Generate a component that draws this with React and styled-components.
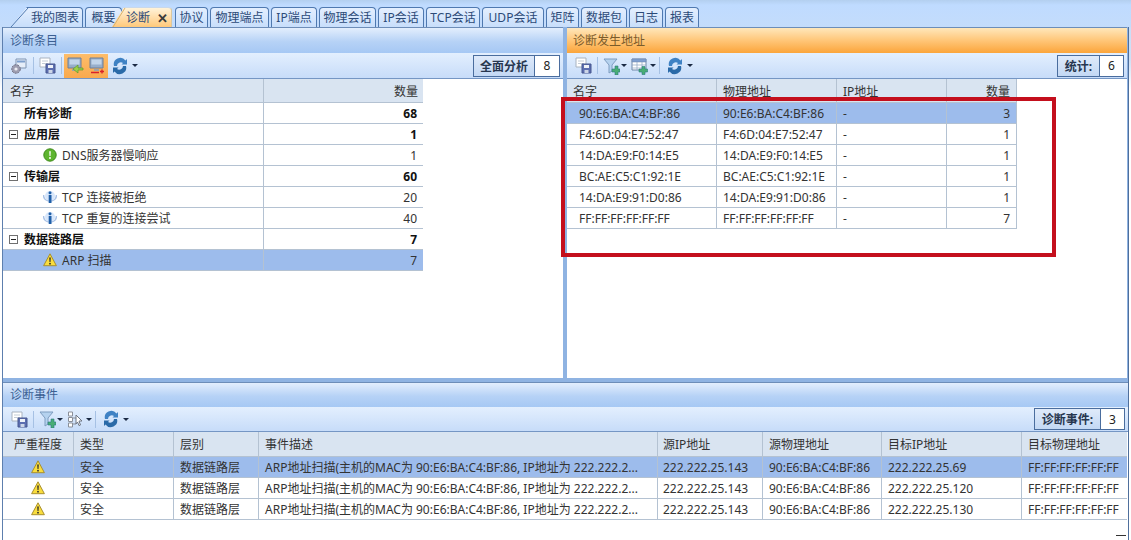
import React from "react";
import styled, { createGlobalStyle } from "styled-components";

const GlobalStyle = createGlobalStyle`
  html, body { margin: 0; padding: 0; background: #fff; }
  body { font-family: "Noto Sans", "Noto Sans CJK SC", sans-serif; font-size: 12px; color: #2b2b2b; }
`;

const Page = styled.div`
  position: relative;
  width: 1131px;
  height: 540px;
  overflow: hidden;
  background: linear-gradient(#c4dcfb 0, #cfe0f5 60px, #fff 90px);
`;

const TabStrip = styled.div`
  display: flex;
  align-items: flex-end;
  height: 27px;
  padding-left: 10px;
  background: linear-gradient(#b3cfef 0, #bfdbff 5px, #c4dcfb 100%);
`;

const Tab = styled.div`
  position: relative;
  box-sizing: border-box;
  flex: none;
  display: flex;
  align-items: center;
  justify-content: ${(p) => (p.$slant ? "flex-start" : "center")};
  width: ${(p) => p.$w}px;
  height: 20px;
  margin-right: ${(p) => p.$gap ?? 2}px;
  padding-left: ${(p) => p.$pad ?? 0}px;
  font-size: 12px;
  line-height: 18px;
  white-space: nowrap;
  color: #2c4a78;
  background: ${(p) => (p.$active ? "linear-gradient(#fff3d9, #ffd9a0 60%, #ffc97a)" : "linear-gradient(#e4effe, #c8defb)")};
  border: 1px solid #4f79b0;
  border-bottom: 0;
  border-left-color: ${(p) => (p.$slant ? "transparent" : "#4f79b0")};
  border-top-color: ${(p) => (p.$active ? "#c9d8ea" : "#4f79b0")};
  border-right-color: ${(p) => (p.$active ? "#d9c7a0" : "#4f79b0")};
  border-radius: ${(p) => (p.$slant ? "0 4px 0 0" : "4px 4px 0 0")};
  clip-path: ${(p) => (p.$slant ? `polygon(${p.$slant}px 0, 100% 0, 100% 100%, 0 100%)` : "none")};
  z-index: ${(p) => (p.$active ? 2 : 1)};
`;

const TabSlantLine = styled.svg`
  position: absolute;
  left: -1px;
  top: -1px;
  display: block;
`;

const TabClose = styled.span`
  margin-left: 7px;
  font-size: 13px;
  font-weight: 700;
  color: #3b3b3b;
`;

const Workspace = styled.div`
  display: grid;
  grid-template-rows: 351px 4px 158px;
  width: 1125px;
  height: 513px;
  margin-left: 2px;
  background: #8fb3e2;
  border-left: 1px solid #5d7fae;
  border-right: 1px solid #4f6f9c;
`;

const TopPanes = styled.div`
  display: grid;
  grid-template-columns: 560px 4px 560px;
  min-height: 0;
`;

const Gutter = styled.div`
  background: #8fb3e2;
`;

const HSplit = styled.div`
  background: #8fb3e2;
`;

const Pane = styled.section`
  display: flex;
  flex-direction: column;
  min-width: 0;
  min-height: 0;
  background: #fff;
`;

const PaneTitle = styled.header`
  display: flex;
  align-items: center;
  flex: none;
  box-sizing: border-box;
  height: ${(p) => p.$h ?? 26}px;
  padding: 0 0 2px ${(p) => (p.$active ? 6 : 7)}px;
  font-size: 12px;
  border-top: 1px solid #6d8db8;
  background: ${(p) =>
    p.$active
      ? "linear-gradient(#ffe7bb, #ffc678 50%, #fba53b)"
      : "linear-gradient(#e3eefd, #b6d2f6 55%, #a6c8f4)"};
  color: ${(p) => (p.$active ? "#7a5b2b" : "#3b5f92")};
`;

const Toolbar = styled.div`
  display: flex;
  align-items: center;
  flex: none;
  box-sizing: border-box;
  height: ${(p) => p.$h ?? 26}px;
  padding: 0 3px 0 5px;
  background: linear-gradient(#e3effe, #c7dcf9);
  border-bottom: 1px solid #7596c4;
`;

const ToolButton = styled.div`
  display: flex;
  align-items: center;
  justify-content: center;
  flex: none;
  width: ${(p) => p.$w ?? 22}px;
  height: 24px;
  margin-left: ${(p) => p.$left ?? 0}px;
  background: ${(p) => (p.$on ? "linear-gradient(#fdbd6b, #f9a94e)" : "transparent")};
`;

const ToolSep = styled.span`
  flex: none;
  width: 1px;
  height: 17px;
  margin: 0 2px 0 3px;
  background: #a6c1e4;
`;

const Caret = styled.span`
  flex: none;
  width: 0;
  height: 0;
  margin-left: ${(p) => p.$left ?? 1}px;
  border-left: 3px solid transparent;
  border-right: 3px solid transparent;
  border-top: 3px solid #1b2a44;
`;

const Stat = styled.div`
  display: flex;
  flex: none;
  box-sizing: border-box;
  height: 22px;
  margin-left: auto;
  border: 1px solid #4a6d9e;
`;

const StatLabel = styled.span`
  display: flex;
  align-items: center;
  justify-content: center;
  box-sizing: border-box;
  width: ${(p) => p.$w}px;
  font-weight: 700;
  color: #27364f;
  background: linear-gradient(#dfeafa, #c3d8f4);
  border-right: 1px solid #4a6d9e;
`;

const StatValue = styled.span`
  display: flex;
  align-items: center;
  justify-content: center;
  width: ${(p) => p.$w ?? 23}px;
  background: #fff;
  color: #222;
`;

const Table = styled.div`
  display: flex;
  flex-direction: column;
  width: ${(p) => p.$w}px;
`;

const Row = styled.div`
  display: grid;
  grid-template-columns: ${(p) => p.$cols};
  height: ${(p) => p.$h ?? 21}px;
  box-sizing: border-box;
  border-bottom: 1px solid #b4c2d2;
  background: ${(p) => (p.$head ? "#d9e4f1" : p.$sel ? "#9dbcec" : "#fff")};
  font-weight: ${(p) => (p.$bold ? 700 : 400)};
  color: ${(p) => (p.$bold ? "#111" : "#333")};
`;

const Cell = styled.div`
  display: flex;
  align-items: center;
  justify-content: ${(p) => p.$justify ?? "flex-start"};
  box-sizing: border-box;
  min-width: 0;
  padding: 0 ${(p) => p.$rpad ?? 6}px 0 ${(p) => p.$indent ?? 6}px;
  white-space: nowrap;
  overflow: hidden;
  border-right: 1px solid ${(p) => (p.$last ? "transparent" : "#b4c2d2")};
`;

const Expander = styled.span`
  position: relative;
  flex: none;
  box-sizing: border-box;
  width: 9px;
  height: 9px;
  margin: 0 6px 0 0;
  border: 1px solid #707070;
  background: #fff;
  &::after {
    content: "";
    position: absolute;
    left: 1px;
    right: 1px;
    top: 3px;
    height: 1px;
    background: #222;
  }
`;

const CellIcon = styled.span`
  display: inline-flex;
  flex: none;
  margin-right: 5px;
`;

const Callout = styled.div`
  position: absolute;
  left: 561px;
  top: 97px;
  width: 495px;
  height: 160px;
  box-sizing: border-box;
  border: 4px solid #c40f1d;
  pointer-events: none;
  z-index: 5;
`;

const CornerDash = styled.span`
  position: absolute;
  left: 1116px;
  top: 535px;
  width: 10px;
  height: 1px;
  background: #333;
`;

const SaveIcon = () => (
  <svg width="17" height="17" viewBox="0 0 17 17">
    <path d="M1 1h10v9H1z" fill="#fff" stroke="#a9b3c0" />
    <path d="M3 4h6M3 6.500h6" stroke="#c3ccd6" />
    <path d="M7 7h9v9H7z" fill="#5c6eb0" stroke="#46578f" />
    <path d="M9 8h5v3H9z" fill="#eef2f8" />
    <path d="M9.500 13h4v3h-4z" fill="#cdd6e7" />
  </svg>
);

const GearIcon = () => (
  <svg width="18" height="18" viewBox="0 0 18 18">
    <path d="M6 2h10v9H6z" fill="#e6eef9" stroke="#7f94b2" />
    <path d="M7 3.500h8v2H7z" fill="#7d9fcc" />
    <circle cx="6" cy="12" r="4.300" fill="#9d9db0" stroke="#6c6c80" strokeDasharray="2 1" />
    <circle cx="6" cy="12" r="1.600" fill="#ececf2" />
  </svg>
);

const MonitorIcon = ({ green }) => (
  <svg width="17" height="18" viewBox="0 0 17 18">
    <path d="M1 1h13v10H1z" fill="#97aecb" stroke="#6d7f98" />
    <path d="M2.500 2.500h10v5h-10z" fill="#c1d4ea" />
    <path d="M5 12h5v2H5z" fill="#a3a3a3" />
    {green ? (
      <path d="M16 11h-5V8l-5 4 5 4v-3h5z" fill="#9ccf4a" stroke="#5f9a2a" strokeWidth=".7" />
    ) : (
      <path d="M2 15.500h8M11 14.500h4M13 12.500v4" stroke="#d8222a" strokeWidth="1.400" />
    )}
  </svg>
);

const RefreshIcon = () => (
  <svg width="16" height="18" viewBox="0 0 16 18">
    <path d="M13.500 3.500A6.500 6.500 0 0 0 2 9h3a3.800 3.800 0 0 1 6-3L9.500 7.500H15V2z" fill="#3f82c4" />
    <path d="M2.500 14.500A6.500 6.500 0 0 0 14 9h-3a3.800 3.800 0 0 1-6 3l1.500-1.500H1V16z" fill="#2a6aa8" />
  </svg>
);

const FilterIcon = () => (
  <svg width="17" height="18" viewBox="0 0 17 18">
    <path d="M1 2h13L9 8v6L6 16V8z" fill="#b5d2ef" stroke="#7f9dc0" />
    <path d="M9 12h3V9h3v3h2v3h-2v3h-3v-3H9z" fill="#49ad75" stroke="#2a7a80" strokeWidth=".6" />
  </svg>
);

const GridIcon = () => (
  <svg width="17" height="18" viewBox="0 0 17 18">
    <path d="M1 2h14v11H1z" fill="#fff" stroke="#6f87a8" />
    <path d="M1 2h14v3H1z" fill="#7f9fd0" stroke="#6f87a8" strokeWidth=".5" />
    <path d="M1 8h14M1 11h14M6 5v8M11 5v8" stroke="#8ca3c2" strokeWidth=".7" />
    <path d="M8 12h3V9.500h3V12h2.500v3H14v2.500h-3V15H8z" fill="#49ad75" stroke="#2a7a80" strokeWidth=".6" />
  </svg>
);

const CursorTreeIcon = () => (
  <svg width="17" height="18" viewBox="0 0 17 18">
    <path d="M1.500 2h4v4h-4zM1.500 7.500h4v4h-4zM1.500 13h4v4h-4z" fill="#fff" stroke="#8a8f98" />
    <path d="M6 8h3M6 14h3" stroke="#8a8f98" />
    <path d="M9 5l6 6h-3l1.500 4-1.500.6L10.500 12 9 14z" fill="#fff" stroke="#6f7784" />
  </svg>
);

const WarnIcon = () => (
  <svg width="14" height="14" viewBox="0 0 14 14">
    <path d="M7 .8 13.400 12.700H.6z" fill="#f9dd3e" stroke="#a88f2e" strokeLinejoin="round" />
    <path d="M6.200 4.500h1.600L7.500 9h-1z" fill="#2a2a2a" />
    <circle cx="7" cy="10.700" r=".9" fill="#2a2a2a" />
  </svg>
);

const OkIcon = () => (
  <svg width="14" height="14" viewBox="0 0 14 14">
    <circle cx="7" cy="7" r="6.200" fill="#5eb52f" stroke="#3d8a1c" />
    <path d="M6.200 3.200h1.600L7.500 8h-1z" fill="#fff" />
    <circle cx="7" cy="10" r="1" fill="#fff" />
  </svg>
);

const InfoIcon = () => (
  <svg width="14" height="15" viewBox="0 0 14 15">
    <path d="M.5 5c0 4 3 6 6.500 6s6.500-2 6.500-6" fill="none" stroke="#a9c2e6" strokeWidth="1.500" />
    <circle cx="7" cy="6" r="5" fill="#d8e7fb" />
    <rect x="5.700" y="5" width="2.800" height="8" fill="#1f5fa8" />
    <circle cx="7" cy="2.800" r="1.500" fill="#1f5fa8" />
  </svg>
);

const tabs = [
  { label: "我的图表", w: 73, slant: 17, pad: 20 },
  { label: "概要", w: 37, gap: -10 },
  { label: "诊断", w: 60, slant: 12, pad: 13, active: true, gap: 3 },
  { label: "协议", w: 33 },
  { label: "物理端点", w: 59 },
  { label: "IP端点", w: 46 },
  { label: "物理会话", w: 57 },
  { label: "IP会话", w: 46 },
  { label: "TCP会话", w: 54 },
  { label: "UDP会话", w: 62 },
  { label: "矩阵", w: 33 },
  { label: "数据包", w: 46 },
  { label: "日志", w: 34 },
  { label: "报表", w: 34 },
];

const diagCols = "261px 159px";
const addrCols = "150px 120px 110px 70px";
const eventCols = "71px 100px 85px 399px 105px 119px 140px 105px";

const diagRows = [
  { name: "所有诊断", count: 68, bold: true, indent: 21 },
  { name: "应用层", count: 1, bold: true, group: true },
  { name: "DNS服务器慢响应", count: 1, icon: <OkIcon /> },
  { name: "传输层", count: 60, bold: true, group: true },
  { name: "TCP 连接被拒绝", count: 20, icon: <InfoIcon /> },
  { name: "TCP 重复的连接尝试", count: 40, icon: <InfoIcon /> },
  { name: "数据链路层", count: 7, bold: true, group: true },
  { name: "ARP 扫描", count: 7, icon: <WarnIcon />, sel: true },
];

const addrRows = [
  { mac: "90:E6:BA:C4:BF:86", count: 3, sel: true },
  { mac: "F4:6D:04:E7:52:47", count: 1 },
  { mac: "14:DA:E9:F0:14:E5", count: 1 },
  { mac: "BC:AE:C5:C1:92:1E", count: 1 },
  { mac: "14:DA:E9:91:D0:86", count: 1 },
  { mac: "FF:FF:FF:FF:FF:FF", count: 7 },
];

const eventRows = [
  { target: "222.222.25.69", sel: true },
  { target: "222.222.25.120" },
  { target: "222.222.25.130" },
];

const eventDesc = "ARP地址扫描(主机的MAC为 90:E6:BA:C4:BF:86, IP地址为 222.222.2...";

const eventHead = ["严重程度", "类型", "层别", "事件描述", "源IP地址", "源物理地址", "目标IP地址", "目标物理地址"];

const Refresh = ({ left }) => (
  <>
    <ToolButton $w={18} $left={left}><RefreshIcon /></ToolButton>
    <Caret $left={3} />
  </>
);

export default function App() {
  return (
    <Page>
      <GlobalStyle />
      <TabStrip>
        {tabs.map((t) => (
          <Tab key={t.label} $w={t.w} $gap={t.gap} $slant={t.slant} $pad={t.pad} $active={t.active}>
            {t.slant && (
              <TabSlantLine width={t.slant + 2} height="20" viewBox={`0 0 ${t.slant + 2} 20`}>
                <line x1="1" y1="20" x2={t.slant + 1} y2="1" stroke={t.active ? "#d9b26e" : "#4f79b0"} />
              </TabSlantLine>
            )}
            {t.label}
            {t.active && <TabClose>✕</TabClose>}
          </Tab>
        ))}
      </TabStrip>

      <Workspace>
        <TopPanes>
          <Pane>
            <PaneTitle>诊断条目</PaneTitle>
            <Toolbar>
              <ToolButton><GearIcon /></ToolButton>
              <ToolSep />
              <ToolButton><SaveIcon /></ToolButton>
              <ToolSep />
              <ToolButton $on><MonitorIcon green /></ToolButton>
              <ToolButton $on><MonitorIcon /></ToolButton>
              <Refresh left={3} />
              <Stat>
                <StatLabel $w={61}>全面分析</StatLabel>
                <StatValue $w={24}>8</StatValue>
              </Stat>
            </Toolbar>
            <Table $w={420}>
              <Row $head $h={24} $cols={diagCols}>
                <Cell $indent={7}>名字</Cell>
                <Cell $justify="flex-end" $rpad={4} $last>数量</Cell>
              </Row>
              {diagRows.map((r) => (
                <Row key={r.name} $cols={diagCols} $bold={r.bold} $sel={r.sel}>
                  <Cell $indent={r.icon ? 40 : r.group ? 6 : r.indent}>
                    {r.group && <Expander />}
                    {r.icon && <CellIcon>{r.icon}</CellIcon>}
                    {r.name}
                  </Cell>
                  <Cell $justify="flex-end" $rpad={5} $last>{r.count}</Cell>
                </Row>
              ))}
            </Table>
          </Pane>

          <Gutter />

          <Pane>
            <PaneTitle $active>诊断发生地址</PaneTitle>
            <Toolbar>
              <ToolButton><SaveIcon /></ToolButton>
              <ToolSep />
              <ToolButton><FilterIcon /></ToolButton>
              <Caret $left={-1} />
              <ToolButton $w={24}><GridIcon /></ToolButton>
              <Caret $left={-1} />
              <ToolSep />
              <Refresh left={4} />
              <Stat>
                <StatLabel $w={42}>统计:</StatLabel>
                <StatValue>6</StatValue>
              </Stat>
            </Toolbar>
            <Table $w={450}>
              <Row $head $h={24} $cols={addrCols}>
                <Cell>名字</Cell>
                <Cell>物理地址</Cell>
                <Cell>IP地址</Cell>
                <Cell $justify="flex-end">数量</Cell>
              </Row>
              {addrRows.map((r) => (
                <Row key={r.mac} $cols={addrCols} $sel={r.sel}>
                  <Cell $indent={12}>{r.mac}</Cell>
                  <Cell>{r.mac}</Cell>
                  <Cell>-</Cell>
                  <Cell $justify="flex-end">{r.count}</Cell>
                </Row>
              ))}
            </Table>
          </Pane>
        </TopPanes>

        <HSplit />

        <Pane>
          <PaneTitle $h={25}>诊断事件</PaneTitle>
          <Toolbar $h={25}>
            <ToolButton><SaveIcon /></ToolButton>
            <ToolSep />
            <ToolButton><FilterIcon /></ToolButton>
            <Caret $left={-1} />
            <ToolButton $w={24}><CursorTreeIcon /></ToolButton>
            <Caret $left={-1} />
            <ToolSep />
            <Refresh left={4} />
            <Stat>
              <StatLabel $w={66}>诊断事件:</StatLabel>
              <StatValue>3</StatValue>
            </Stat>
          </Toolbar>
          <Table $w={1124}>
            <Row $head $h={25} $cols={eventCols}>
              {eventHead.map((h, i) => (
                <Cell
                  key={h}
                  $indent={h === "源IP地址" ? 5 : 6}
                  $justify={i === 0 ? "center" : "flex-start"}
                  $last={i === eventHead.length - 1}
                >
                  {h}
                </Cell>
              ))}
            </Row>
            {eventRows.map((r) => (
              <Row key={r.target} $cols={eventCols} $sel={r.sel}>
                <Cell $justify="center"><WarnIcon /></Cell>
                <Cell>安全</Cell>
                <Cell>数据链路层</Cell>
                <Cell>{eventDesc}</Cell>
                <Cell $indent={5}>222.222.25.143</Cell>
                <Cell>90:E6:BA:C4:BF:86</Cell>
                <Cell>{r.target}</Cell>
                <Cell $last>FF:FF:FF:FF:FF:FF</Cell>
              </Row>
            ))}
          </Table>
        </Pane>
      </Workspace>

      <Callout />
      <CornerDash />
    </Page>
  );
}
